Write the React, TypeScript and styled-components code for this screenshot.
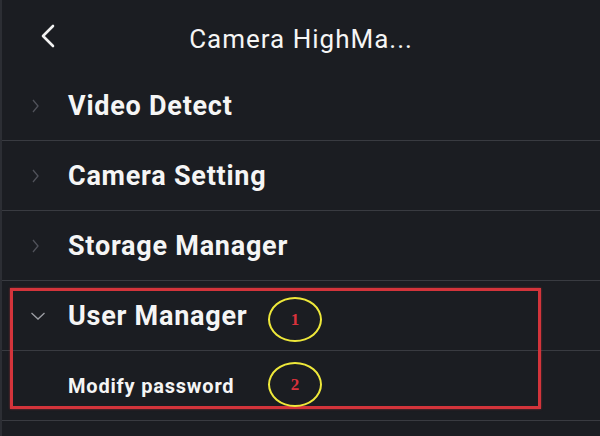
import styled, { createGlobalStyle } from 'styled-components';

const GlobalStyle = createGlobalStyle`
html, body {
    margin: 0;
    padding: 0;
    background: #1b1d22;
}
`;

interface Section {
    title: string;
    open?: boolean;
    items?: string[];
};

const sections: Section[] = [
    { title: 'Video Detect' },
    { title: 'Camera Setting' },
    { title: 'Storage Manager' },
    { title: 'User Manager', open: true, items: ['Modify password'] },
];

export default function App () {
    return (
        <>
            <GlobalStyle />
            <Screen>
                <Header>
                    <BackButton>
                        <svg width="18" height="24" viewBox="0 0 18 24">
                            <polyline points="14,2 4,12 14,22" fill="none" stroke="#f2f2f2" strokeWidth="2.6" strokeLinecap="round" strokeLinejoin="round" />
                        </svg>
                    </BackButton>
                    <Title>Camera HighMa...</Title>
                </Header>
                <List>
                    {sections.map((s) => <div key={s.title}>
                        <Row>
                            <Chevron>
                                {s.open
                                    ? <svg width="16" height="10" viewBox="0 0 16 10">
                                        <polyline points="1.5,2 8,8 14.5,2" fill="none" stroke="#9c9ea4" strokeWidth="1.3" />
                                    </svg>
                                    : <svg width="10" height="14" viewBox="0 0 10 14">
                                        <polyline points="3,1 8,7 3,13" fill="none" stroke="#50525a" strokeWidth="1.3" />
                                    </svg>
                                }
                            </Chevron>
                            <RowLabel>{s.title}</RowLabel>
                        </Row>
                        {s.items?.map(item => <Row key={item}>
                            <span />
                            <SubLabel>{item}</SubLabel>
                        </Row>)}
                    </div>)}
                </List>
                <Highlight />
                <Marker top={297}>1</Marker>
                <Marker top={362}>2</Marker>
            </Screen>
        </>
    );
}

const Screen = styled.div`
position: relative;
width: 600px;
height: 436px;
overflow: hidden;
background: #1b1d22;
border-left: 2px solid #2c2e34;
box-sizing: border-box;
font-family: Roboto, 'Noto Sans', sans-serif;
color: #f5f5f5;
`;

const Header = styled.div`
display: grid;
grid-template-columns: 1fr auto 1fr;
align-items: center;
height: 71px;
padding-top: 6px;
box-sizing: border-box;
`;

const BackButton = styled.div`
display: flex;
padding-left: 37px;
margin-top: -6px;
`;

const Title = styled.div`
font-size: 26px;
font-weight: 400;
letter-spacing: 1px;
`;

const List = styled.div`
display: flex;
flex-direction: column;
`;

const Row = styled.div`
display: grid;
grid-template-columns: 66px auto;
align-items: center;
height: 70px;
border-bottom: 1px solid #393b41;
box-sizing: border-box;
`;

const Chevron = styled.span`
display: flex;
padding-left: 28px;
`;

const RowLabel = styled.span`
font-size: 27px;
font-weight: 700;
letter-spacing: 0.75px;
`;

const SubLabel = styled.span`
font-size: 20px;
font-weight: 700;
letter-spacing: 0.8px;
`;

const Highlight = styled.div`
position: absolute;
left: 8px;
top: 288px;
width: 531px;
height: 121px;
border: 3px solid #d3343b;
box-sizing: border-box;
box-shadow: 0 0 2px rgba(211, 52, 59, 0.6);
`;

const Marker = styled.div<{top: number}>`
position: absolute;
left: 266px;
top: ${p => p.top}px;
width: 54px;
height: 45px;
border: 2.5px solid #eee83a;
border-radius: 50%;
box-sizing: border-box;
display: flex;
align-items: center;
justify-content: center;
color: #d8323c;
font-family: 'Liberation Serif', serif;
font-weight: 700;
font-size: 17px;
`;
